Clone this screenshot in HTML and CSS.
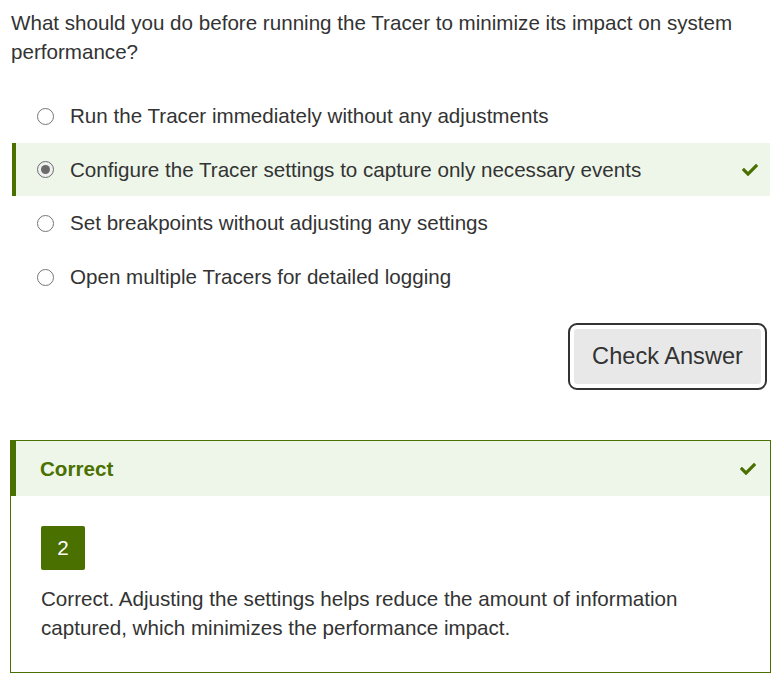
FILE: index.html
```html
<!DOCTYPE html>
<html lang="en">
<head>
<meta charset="utf-8">
<title>Quiz</title>
<link rel="stylesheet" href="styles.css">
</head>
<body>
<div class="quiz">
  <p class="question">What should you do before running the Tracer to minimize its impact on system performance?</p>
  <ul class="options">
    <li class="option"><span class="radio"></span><span class="label">Run the Tracer immediately without any adjustments</span></li>
    <li class="option selected"><span class="radio checked"></span><span class="label">Configure the Tracer settings to capture only necessary events</span>
      <svg class="check" viewBox="0 0 512 512" width="16" height="16"><path fill="currentColor" d="M173.9 439.4l-166.4-166.4c-10-10-10-26.2 0-36.2l36.2-36.2c10-10 26.2-10 36.2 0L192 312.7 432.1 72.6c10-10 26.2-10 36.2 0l36.2 36.2c10 10 10 26.2 0 36.2l-294.4 294.4c-10 10-26.2 10-36.2 0z"/></svg>
    </li>
    <li class="option"><span class="radio"></span><span class="label">Set breakpoints without adjusting any settings</span></li>
    <li class="option"><span class="radio"></span><span class="label">Open multiple Tracers for detailed logging</span></li>
  </ul>
  <div class="actions">
    <button class="check-btn" type="button">Check Answer</button>
  </div>
  <div class="feedback">
    <div class="feedback-head">
      <span class="feedback-title">Correct</span>
      <svg class="check" viewBox="0 0 512 512" width="16" height="16"><path fill="currentColor" d="M173.9 439.4l-166.4-166.4c-10-10-10-26.2 0-36.2l36.2-36.2c10-10 26.2-10 36.2 0L192 312.7 432.1 72.6c10-10 26.2-10 36.2 0l36.2 36.2c10 10 10 26.2 0 36.2l-294.4 294.4c-10 10-26.2 10-36.2 0z"/></svg>
    </div>
    <div class="feedback-body">
      <div class="badge">2</div>
      <p class="explain">Correct. Adjusting the settings helps reduce the amount of information captured, which minimizes the performance impact.</p>
    </div>
  </div>
</div>
</body>
</html>
```
FILE: styles.css
```css
* { box-sizing: border-box; }
body {
  margin: 0;
  background: #fff;
  color: #333;
  font-family: "Liberation Sans", Arial, sans-serif;
}
.quiz {
  padding: 8px 10px 14px 10px;
}
.question {
  margin: 0 0 0 1px;
  font-size: 20.6px;
  line-height: 29px;
}
.options {
  list-style: none;
  margin: 23px 1px 0 2px;
  padding: 0;
}
.option {
  display: flex;
  align-items: center;
  height: 54px;
  border-left: 4px solid transparent;
  padding: 0 12px 0 21px;
  font-size: 20.6px;
}
.option.selected {
  background: #eef6ea;
  border-left-color: #4a7000;
  height: 53px;
}
.radio {
  width: 17px;
  height: 17px;
  border: 1px solid #767676;
  border-radius: 50%;
  background: #fff;
  flex: none;
  margin-right: 16px;
  display: flex;
  align-items: center;
  justify-content: center;
}
.radio.checked {
  border-color: #6b6b6b;
  background: #f0f0f0;
}
.radio.checked::after {
  content: "";
  width: 9px;
  height: 9px;
  border-radius: 50%;
  background: #6b6b6b;
}
.label { flex: 1; }
.check {
  color: #4a7000;
  flex: none;
}
.actions {
  display: flex;
  justify-content: flex-end;
  margin-top: 19px;
  padding-right: 4px;
}
.check-btn {
  font-family: "Liberation Sans", Arial, sans-serif;
  font-size: 23.6px;
  color: #333;
  background: #e8e8e8;
  border: none;
  border-radius: 3px;
  width: 187px;
  height: 55px;
  outline: 2px solid #333;
  outline-offset: 4px;
  margin: 6px;
}
.feedback {
  margin-top: 50px;
  border: 1px solid #4a7000;
}
.feedback-head {
  display: flex;
  align-items: center;
  justify-content: space-between;
  height: 55px;
  background: #eef6ea;
  border-left: 5px solid #4a7000;
  padding: 0 14px 0 24px;
}
.feedback-title {
  color: #4a7000;
  font-weight: bold;
  font-size: 20.6px;
}
.feedback-body {
  padding: 30px 30px 30px 30px;
}
.badge {
  width: 44px;
  height: 44px;
  background: #4a7000;
  color: #fff;
  border-radius: 2px;
  display: flex;
  align-items: center;
  justify-content: center;
  font-size: 20.6px;
}
.explain {
  margin: 14px 0 0 0;
  font-size: 20.6px;
  line-height: 29px;
}
```
